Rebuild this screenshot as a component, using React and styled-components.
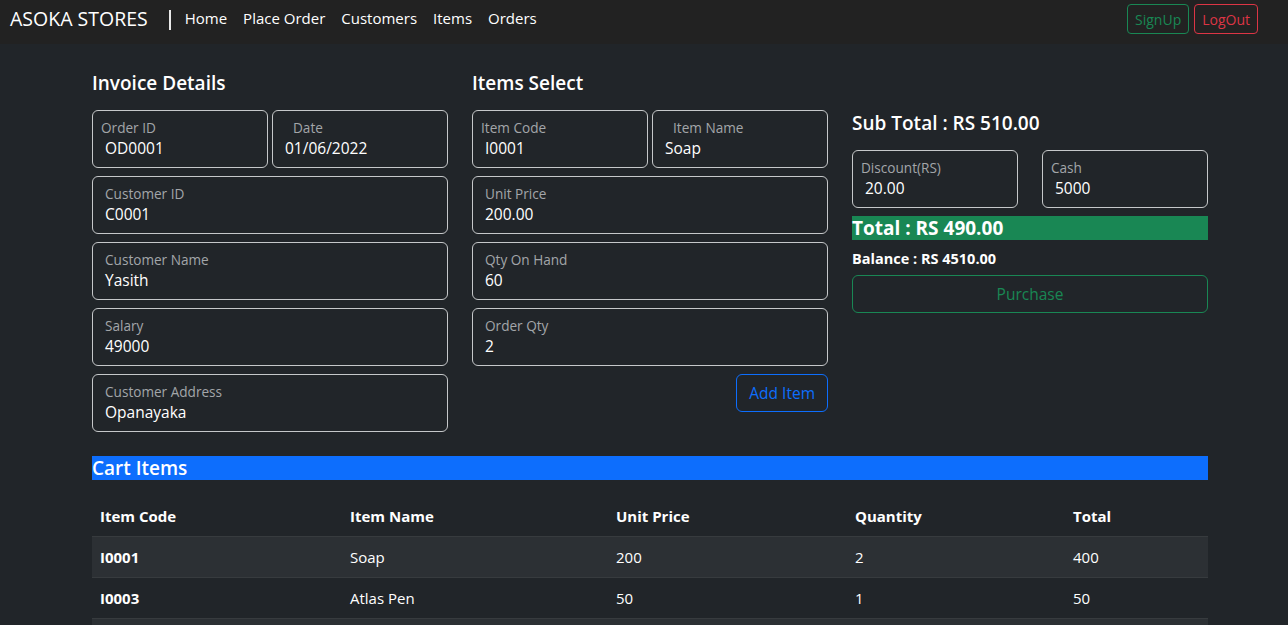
import React from "react";
import styled, { createGlobalStyle } from "styled-components";

const Global = createGlobalStyle`
  * { box-sizing: border-box; }
  html, body { margin: 0; padding: 0; }
  body {
    background: #212529;
    color: #fff;
    font-family: "Open Sans", "Noto Sans", sans-serif;
    font-size: 16px;
  }
`;

const Nav = styled.nav`
  height: 44px;
  background: #222222;
  display: flex;
  align-items: flex-start;
  padding: 0 30px 0 10px;
`;
const Brand = styled.div`
  font-size: 19.5px;
  color: #fff;
  margin-right: 21px;
  line-height: 26px;
  margin-top: 6px;
`;
const Divider = styled.span`
  width: 2px;
  height: 20px;
  background: #e8e8e8;
  margin: 10px 14px 0 0;
`;
const NavLink = styled.a`
  color: #fff;
  font-size: 15px;
  margin-right: 16px;
  text-decoration: none;
  line-height: 22px;
  margin-top: 7px;
`;
const NavRight = styled.div`
  margin-left: auto;
  display: flex;
  gap: 5px;
  margin-top: 4px;
`;
const SmallBtn = styled.button`
  height: 30px;
  padding: 0 7px;
  background: transparent;
  border: 1px solid ${(p) => p.$c};
  color: ${(p) => p.$c};
  border-radius: 4px;
  font-family: inherit;
  font-size: 14px;
`;

const Container = styled.main`
  width: 1116px;
  margin-left: 92px;
  padding-top: 27px;
`;
const Row = styled.div`
  display: grid;
  grid-template-columns: repeat(3, 356px);
  column-gap: 24px;
`;
const Col = styled.section`
  display: flex;
  flex-direction: column;
  gap: 8px;
`;
const H5 = styled.h5`
  margin: 0 0 6px;
  font-size: 19px;
  font-weight: 600;
  height: 25px;
  line-height: 25px;
`;
const SubTotal = styled(H5)`
  margin: 0;
  margin-top: 40px;
  margin-bottom: 6px;
`;
const Pair = styled.div`
  display: grid;
  grid-template-columns: 1fr 1fr;
  column-gap: ${(p) => p.$gap || 4}px;
`;
const Box = styled.div`
  height: 58px;
  border: 1px solid #c6c8ca;
  border-radius: 6px;
  position: relative;
  background: #212529;
`;
const Label = styled.div`
  position: absolute;
  top: 8px;
  left: ${(p) => p.$x - 1}px;
  font-size: 13.6px;
  color: #a3a6a9;
  line-height: 18px;
`;
const Value = styled.div`
  position: absolute;
  top: 26px;
  left: 12px;
  font-size: 15.5px;
  color: #fff;
  line-height: 22px;
`;

const Field = ({ label, value, lx = 13 }) => (
  <Box>
    <Label $x={lx}>{label}</Label>
    <Value>{value}</Value>
  </Box>
);

const BtnRow = styled.div`
  display: flex;
  justify-content: flex-end;
`;
const OutlineBtn = styled.button`
  height: 38px;
  padding: 0 12px;
  background: transparent;
  border: 1px solid ${(p) => p.$c};
  color: ${(p) => p.$c};
  border-radius: 6px;
  font-family: inherit;
  font-size: 15.5px;
  width: ${(p) => (p.$full ? "100%" : "auto")};
`;
const TotalBar = styled.div`
  height: 24px;
  background: #198754;
  font-size: 19px;
  font-weight: 700;
  line-height: 24px;
  color: #fff;
`;
const Balance = styled.div`
  font-size: 14.5px;
  font-weight: 700;
  line-height: 18px;
  margin: 2px 0 -1px;
`;

const CartBar = styled.div`
  margin-top: 24px;
  height: 24px;
  background: #0d6efd;
  font-size: 19px;
  font-weight: 600;
  line-height: 24px;
  color: #fff;
`;
const Table = styled.table`
  width: 100%;
  margin-top: 16px;
  border-collapse: collapse;
  table-layout: fixed;
`;
const Th = styled.th`
  text-align: left;
  font-size: 15px;
  font-weight: 700;
  padding: 0 8px;
  height: 40px;
  border-bottom: 1px solid #373b3e;
  width: ${(p) => p.$w}px;
`;
const Tr = styled.tr`
  background: ${(p) => (p.$striped ? "#2c3034" : "transparent")};
`;
const Td = styled.td`
  font-size: 15px;
  font-weight: ${(p) => (p.$bold ? 700 : 400)};
  padding: 0 8px;
  height: 41px;
  border-bottom: 1px solid #373b3e;
`;

const cols = [
  { t: "Item Code", w: 250 },
  { t: "Item Name", w: 266 },
  { t: "Unit Price", w: 239 },
  { t: "Quantity", w: 218 },
  { t: "Total", w: 143 },
];
const rows = [
  ["I0001", "Soap", "200", "2", "400"],
  ["I0003", "Atlas Pen", "50", "1", "50"],
  ["I0002", "Pencil", "30", "2", "60"],
];

export default function App() {
  return (
    <>
      <Global />
      <Nav>
        <Brand>ASOKA STORES</Brand>
        <Divider />
        {["Home", "Place Order", "Customers", "Items", "Orders"].map((l) => (
          <NavLink key={l}>{l}</NavLink>
        ))}
        <NavRight>
          <SmallBtn $c="#198754">SignUp</SmallBtn>
          <SmallBtn $c="#dc3545">LogOut</SmallBtn>
        </NavRight>
      </Nav>
      <Container>
        <Row>
          <Col>
            <H5>Invoice Details</H5>
            <Pair>
              <Field label="Order ID" value="OD0001" lx={9} />
              <Field label="Date" value="01/06/2022" lx={21} />
            </Pair>
            <Field label="Customer ID" value="C0001" />
            <Field label="Customer Name" value="Yasith" />
            <Field label="Salary" value="49000" />
            <Field label="Customer Address" value="Opanayaka" />
          </Col>
          <Col>
            <H5>Items Select</H5>
            <Pair>
              <Field label="Item Code" value="I0001" lx={9} />
              <Field label="Item Name" value="Soap" lx={21} />
            </Pair>
            <Field label="Unit Price" value="200.00" />
            <Field label="Qty On Hand" value="60" />
            <Field label="Order Qty" value="2" />
            <BtnRow>
              <OutlineBtn $c="#0d6efd">Add Item</OutlineBtn>
            </BtnRow>
          </Col>
          <Col>
            <SubTotal>Sub Total : RS 510.00</SubTotal>
            <Pair $gap={24}>
              <Field label="Discount(RS)" value="20.00" lx={9} />
              <Field label="Cash" value="5000" lx={9} />
            </Pair>
            <TotalBar>Total : RS 490.00</TotalBar>
            <Balance>Balance : RS 4510.00</Balance>
            <OutlineBtn $c="#198754" $full>
              Purchase
            </OutlineBtn>
          </Col>
        </Row>
        <CartBar>Cart Items</CartBar>
        <Table>
          <thead>
            <tr>
              {cols.map((c) => (
                <Th key={c.t} $w={c.w}>
                  {c.t}
                </Th>
              ))}
            </tr>
          </thead>
          <tbody>
            {rows.map((r, i) => (
              <Tr key={r[0]} $striped={i % 2 === 0}>
                {r.map((v, j) => (
                  <Td key={j} $bold={j === 0}>
                    {v}
                  </Td>
                ))}
              </Tr>
            ))}
          </tbody>
        </Table>
      </Container>
    </>
  );
}
